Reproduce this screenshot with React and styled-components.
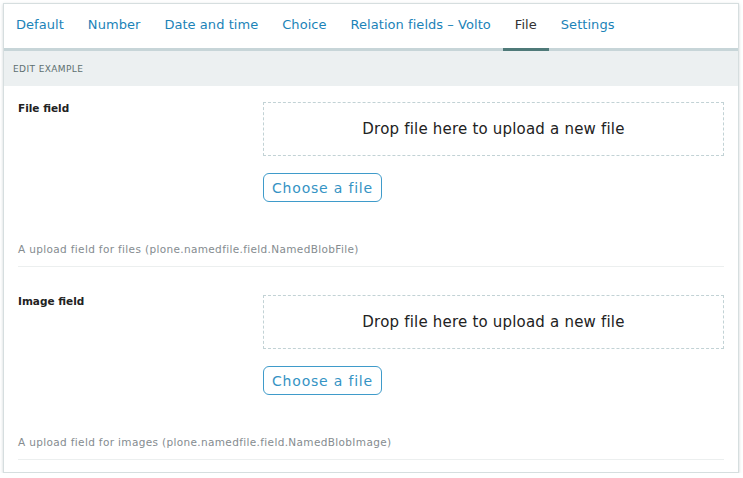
import React from "react";
import styled, { createGlobalStyle } from "styled-components";

const Global = createGlobalStyle`
  html, body { margin: 0; padding: 0; background: #ffffff; }
  body { font-family: "DejaVu Sans", "Noto Sans", sans-serif; }
  * { box-sizing: border-box; }
`;

const Page = styled.div`
  padding: 3px 4px 0 3px;
`;

const Card = styled.div`
  border: 1px solid #d6dedf;
  box-shadow: 0 1px 3px rgba(120, 140, 145, 0.35);
  background: #fff;
  padding-bottom: 12px;
`;

const Tabs = styled.nav`
  display: flex;
  height: 47px;
  border-bottom: 3px solid #c7d5d8;
`;

const Tab = styled.div`
  display: flex;
  align-items: center;
  padding: 0 12px 4px 12px;
  font-size: 13px;
  color: ${(p) => (p.$active ? "#333333" : "#1b83b8")};
  margin-bottom: -3px;
  border-bottom: 3px solid ${(p) => (p.$active ? "#4f7a79" : "transparent")};
  white-space: nowrap;
  letter-spacing: 0.05px;
`;

const SectionHeader = styled.div`
  background: #ecf0f1;
  height: 35px;
  display: flex;
  align-items: center;
  padding-left: 9px;
  font-size: 9px;
  color: #5d6f6f;
  letter-spacing: 0.4px;
  text-transform: uppercase;
`;

const Fields = styled.div`
  padding: 16px 14px 0 14px;
  display: flex;
  flex-direction: column;
  gap: 28px;
`;

const Field = styled.div`
  border-bottom: 1px solid #ecefef;
`;

const FieldRow = styled.div`
  display: grid;
  grid-template-columns: 245px 1fr;
`;

const Label = styled.div`
  font-size: 10.5px;
  font-weight: bold;
  color: #222;
  line-height: 12px;
`;

const Widget = styled.div`
  display: flex;
  flex-direction: column;
  align-items: flex-start;
  gap: 17px;
`;

const DropZone = styled.div`
  width: 100%;
  height: 54px;
  border: 1px dashed #c2d2d5;
  display: flex;
  align-items: center;
  justify-content: center;
  font-size: 15px;
  color: #222;
  letter-spacing: 0.2px;
`;

const ChooseButton = styled.button`
  height: 29px;
  width: 119px;
  border: 1px solid #3f9bca;
  border-radius: 6px;
  background: #fff;
  color: #3593c4;
  font-family: inherit;
  font-size: 14px;
  letter-spacing: 0.8px;
  padding: 0;
  cursor: pointer;
`;

const Description = styled.div`
  font-size: 10.5px;
  color: #858c90;
  padding: 40px 0 10px 0;
  line-height: 14px;
  letter-spacing: 0.35px;
`;

const tabs = [
  "Default",
  "Number",
  "Date and time",
  "Choice",
  "Relation fields – Volto",
  "File",
  "Settings",
];

const fields = [
  {
    label: "File field",
    description: "A upload field for files (plone.namedfile.field.NamedBlobFile)",
  },
  {
    label: "Image field",
    description: "A upload field for images (plone.namedfile.field.NamedBlobImage)",
  },
];

export default function App() {
  return (
    <>
      <Global />
      <Page>
        <Card>
          <Tabs>
            {tabs.map((t) => (
              <Tab key={t} $active={t === "File"}>
                {t}
              </Tab>
            ))}
          </Tabs>
          <SectionHeader>Edit example</SectionHeader>
          <Fields>
            {fields.map((f) => (
              <Field key={f.label}>
                <FieldRow>
                  <Label>{f.label}</Label>
                  <Widget>
                    <DropZone>Drop file here to upload a new file</DropZone>
                    <ChooseButton>Choose a file</ChooseButton>
                  </Widget>
                </FieldRow>
                <Description>{f.description}</Description>
              </Field>
            ))}
          </Fields>
        </Card>
      </Page>
    </>
  );
}
